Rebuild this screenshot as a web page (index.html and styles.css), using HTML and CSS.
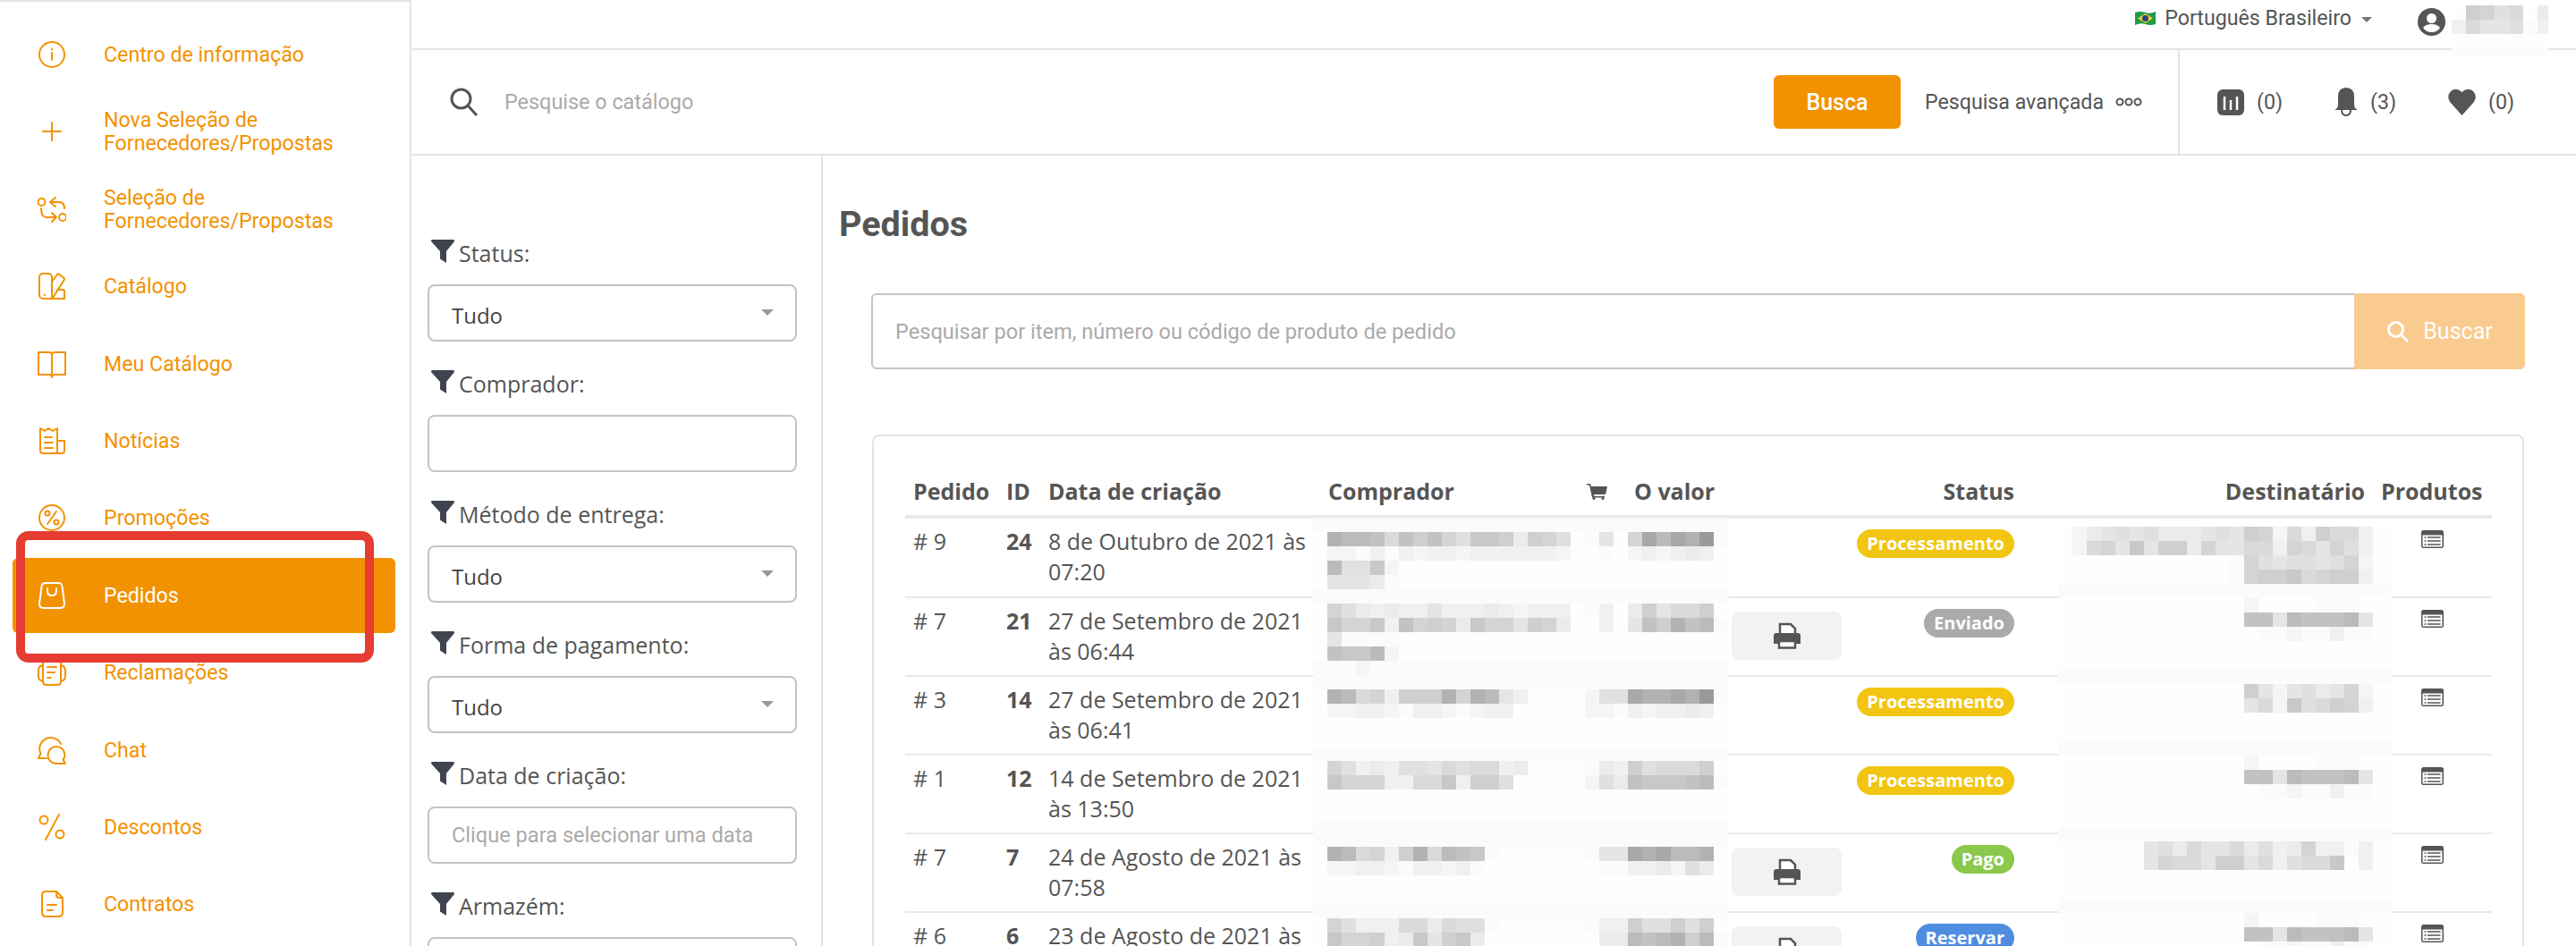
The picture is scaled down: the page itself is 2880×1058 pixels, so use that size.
FILE: index.html
```html
<!DOCTYPE html>
<html lang="pt-BR">
<head>
    <meta charset="UTF-8">
    <meta name="viewport" content="width=device-width, initial-scale=1.0">
    <title>Pedidos</title>
    <link rel="stylesheet" href="styles.css">
</head>
<body>
    <div class="app">
        <!-- Sidebar -->
        <nav class="sidebar">
            <a class="nav-item">
                <svg class="nav-icon" viewBox="0 0 32 32"><circle cx="16" cy="16" r="14"/><path d="M16 14v8M16 9.500v1"/></svg>
                <span>Centro de informação</span>
            </a>
            <a class="nav-item">
                <svg class="nav-icon" viewBox="0 0 32 32"><path d="M16 6v20M6 16h20"/></svg>
                <span>Nova Seleção de Fornecedores/Propostas</span>
            </a>
            <a class="nav-item">
                <svg class="nav-icon" viewBox="0 0 32 32"><circle cx="4.500" cy="8" r="4"/><circle cx="28" cy="25" r="4"/><path d="M20 3l-6 5 6 5M14 8h10q6 0 6 7M4 15q0 10 6 10h11M16 20l5 5-5 5"/></svg>
                <span>Seleção de Fornecedores/Propostas</span>
            </a>
            <a class="nav-item">
                <svg class="nav-icon" viewBox="0 0 32 32"><path d="M6 2h6a4 4 0 0 1 4 4v24H6a4 4 0 0 1-4-4V6a4 4 0 0 1 4-4zM16 11l6-8q1-1 2.500 0l5 4q1 1 0 2.500L17 29M22 20h6q2 0 2 2v8H14M8 25.500v.5"/></svg>
                <span>Catálogo</span>
            </a>
            <a class="nav-item">
                <svg class="nav-icon" viewBox="0 0 32 32"><path d="M1 3h12q3 0 3 3v25q0-3-3-3H1zM31 3H19q-3 0-3 3M31 3v25H19q-3 0-3 3"/></svg>
                <span>Meu Catálogo</span>
            </a>
            <a class="nav-item">
                <svg class="nav-icon" viewBox="0 0 32 32"><path d="M3 2l5 3 4-3 5 3 5-3v28H6q-3 0-3-3zM22 16h8v11q0 3-3 3h-5M8 12h8M8 18h9M8 24h9"/></svg>
                <span>Notícias</span>
            </a>
            <a class="nav-item">
                <svg class="nav-icon" viewBox="0 0 32 32"><circle cx="16" cy="16" r="14"/><circle cx="11" cy="11" r="2.500"/><circle cx="21" cy="21" r="2.500"/><path d="M21 9L11 23"/></svg>
                <span>Promoções</span>
            </a>
            <a class="nav-item active">
                <svg class="nav-icon" viewBox="0 0 32 32"><path d="M9 2h14q4 0 4.500 4L30 25q0 5-5 5H7q-5 0-5-5L4.500 6Q5 2 9 2zM11 8v3q0 5 5 5t5-5V8"/></svg>
                <span>Pedidos</span>
            </a>
            <a class="nav-item">
                <svg class="nav-icon" viewBox="0 0 32 32"><path d="M10 2h12q4 0 4 4v20q0 4-4 4H10q-4 0-4-4V6q0-4 4-4zM6 8q-5 1-5 6v6q0 5 5 6M26 8q5 1 5 6v6q0 5-5 6M11 10h10M11 16h8M11 22h4"/></svg>
                <span>Reclamações</span>
            </a>
            <a class="nav-item">
                <svg class="nav-icon" viewBox="0 0 32 32"><path d="M10 25H1l2.500-5A12 12 0 1 1 26 9M31 31H21a9.500 9.500 0 1 1 9.500-9.500q0 3-2 5z"/></svg>
                <span>Chat</span>
            </a>
            <a class="nav-item">
                <svg class="nav-icon" viewBox="0 0 32 32"><circle cx="7" cy="8" r="4.500"/><circle cx="25" cy="24" r="4.500"/><path d="M24 2L9 30"/></svg>
                <span>Descontos</span>
            </a>
            <a class="nav-item">
                <svg class="nav-icon" viewBox="0 0 32 32"><path d="M9 2h12l7 7v16q0 5-5 5H9q-4 0-4-5V6q0-4 4-4zM21 2v4q0 3 3 3h4M11 17h10M11 23h6"/></svg>
                <span>Contratos</span>
            </a>
        </nav>

        <div class="page">
            <!-- Top bar -->
            <div class="topbar">
                <svg class="flag" viewBox="0 0 23 15"><path fill="#1f9a48" d="M0 1q6-2 11.500 0T23 0v14q-6 2-11.500 0T0 15z"/><path fill="#f3d21b" d="M11.500 2L20 7.500 11.500 13 3 7.500z"/><circle fill="#24418f" cx="11.500" cy="7.500" r="3.500"/></svg>
                <span class="lang">Português Brasileiro</span>
                <span class="caret"></span>
                <svg class="user" viewBox="0 0 31 31"><circle fill="#555" cx="15.500" cy="15.500" r="15.500"/><circle fill="#fff" cx="15.500" cy="11.500" r="5.500"/><path fill="#fff" d="M6 22q3-4 9.500-4T25 22q-3 5-9.500 5T6 22z"/></svg>
            </div>

            <!-- Catalog search -->
            <div class="searchbar">
                <svg class="search-icon" viewBox="0 0 32 32"><circle cx="12.500" cy="12.500" r="10.500"/><path d="M20 20l10 11"/></svg>
                <input class="catalog-input" type="text" placeholder="Pesquise o catálogo">
                <button class="btn-search" type="button">Busca</button>
                <span class="advanced">Pesquisa avançada</span>
                <svg class="dots" viewBox="0 0 30 10"><circle cx="5" cy="5" r="3.500"/><circle cx="15" cy="5" r="3.500"/><circle cx="25" cy="5" r="3.500"/></svg>
                <div class="counters">
                    <div class="counter">
                        <svg class="counter-bars" viewBox="0 0 30 29"><rect fill="#555" width="30" height="29" rx="6"/><path stroke="#fff" stroke-width="2.500" d="M8 8v15M15 12v11M22 8v15"/></svg>
                        <span>(0)</span>
                    </div>
                    <div class="counter">
                        <svg class="counter-bell" viewBox="0 0 26 32"><path fill="#555" d="M13 0q9 0 9 10v9q0 4 4 6H0q4-2 4-6v-9Q4 0 13 0z"/><path fill="none" stroke="#555" stroke-width="2" d="M8 25q0 6 5 6t5-6"/></svg>
                        <span>(3)</span>
                    </div>
                    <div class="counter">
                        <svg class="counter-heart" viewBox="0 0 31 30"><path fill="#555" d="M15.500 30L2 15Q-2 8 3 3q6-5 12.500 1Q22-2 28 3q5 5 1 12z"/></svg>
                        <span>(0)</span>
                    </div>
                </div>
            </div>

            <div class="content">
                <!-- Filters -->
                <aside class="filters">
                    <label class="filter-label"><svg class="funnel" viewBox="0 0 26 26"><path d="M1 0h24q1 0 1 2l-9 11v13l-7-4.500V13L0 2q0-2 1-2z"/></svg>Status:</label>
                    <div class="select-wrap"><select class="control"><option>Tudo</option></select></div>

                    <label class="filter-label"><svg class="funnel" viewBox="0 0 26 26"><path d="M1 0h24q1 0 1 2l-9 11v13l-7-4.500V13L0 2q0-2 1-2z"/></svg>Comprador:</label>
                    <input class="control" type="text">

                    <label class="filter-label"><svg class="funnel" viewBox="0 0 26 26"><path d="M1 0h24q1 0 1 2l-9 11v13l-7-4.500V13L0 2q0-2 1-2z"/></svg>Método de entrega:</label>
                    <div class="select-wrap"><select class="control"><option>Tudo</option></select></div>

                    <label class="filter-label"><svg class="funnel" viewBox="0 0 26 26"><path d="M1 0h24q1 0 1 2l-9 11v13l-7-4.500V13L0 2q0-2 1-2z"/></svg>Forma de pagamento:</label>
                    <div class="select-wrap"><select class="control"><option>Tudo</option></select></div>

                    <label class="filter-label"><svg class="funnel" viewBox="0 0 26 26"><path d="M1 0h24q1 0 1 2l-9 11v13l-7-4.500V13L0 2q0-2 1-2z"/></svg>Data de criação:</label>
                    <input class="control control-date" type="text" placeholder="Clique para selecionar uma data">

                    <label class="filter-label"><svg class="funnel" viewBox="0 0 26 26"><path d="M1 0h24q1 0 1 2l-9 11v13l-7-4.500V13L0 2q0-2 1-2z"/></svg>Armazém:</label>
                    <div class="select-wrap"><select class="control"><option></option></select></div>
                </aside>

                <!-- Orders -->
                <main class="orders">
                    <h1>Pedidos</h1>
                    <div class="order-search">
                        <input type="text" placeholder="Pesquisar por item, número ou código de produto de pedido">
                        <button type="button">
                            <svg class="search-icon-white" viewBox="0 0 26 26"><circle cx="10.500" cy="10.500" r="8"/><path d="M16.500 16.500L24 24"/></svg>
                            Buscar
                        </button>
                    </div>

                    <div class="card">
                        <table class="order-table">
                            <colgroup>
                                <col class="col-order"><col class="col-id"><col class="col-date"><col class="col-buyer"><col class="col-cart"><col class="col-value"><col class="col-print"><col class="col-status"><col class="col-dest"><col class="col-products">
                            </colgroup>
                            <thead>
                                <tr>
                                    <th>Pedido</th>
                                    <th>ID</th>
                                    <th>Data de criação</th>
                                    <th>Comprador</th>
                                    <th><svg class="cart" viewBox="0 0 23 18"><path d="M0 0h4l1 3h18l-2 9H8l.5 2H20v1.500H6L3 1.500H0z"/><circle cx="8" cy="16.500" r="1.500"/><circle cx="18" cy="16.500" r="1.500"/></svg></th>
                                    <th>O valor</th>
                                    <th></th>
                                    <th class="right">Status</th>
                                    <th class="right">Destinatário</th>
                                    <th>Produtos</th>
                                </tr>
                            </thead>
                            <tbody>
                                <tr>
                                    <td># 9</td><td class="id">24</td><td>8 de Outubro de 2021 às 07:20</td><td></td><td></td><td></td><td></td>
                                    <td class="right"><span class="badge processing">Processamento</span></td><td></td>
                                    <td class="center"><svg class="list-icon" viewBox="0 0 25 20"><use href="#list"/></svg></td>
                                </tr>
                                <tr>
                                    <td># 7</td><td class="id">21</td><td>27 de Setembro de 2021 às 06:44</td><td></td><td></td><td></td>
                                    <td><button class="print" type="button"><svg class="print-icon" viewBox="0 0 32 30"><use href="#printer"/></svg></button></td>
                                    <td class="right"><span class="badge sent">Enviado</span></td><td></td>
                                    <td class="center"><svg class="list-icon" viewBox="0 0 25 20"><use href="#list"/></svg></td>
                                </tr>
                                <tr>
                                    <td># 3</td><td class="id">14</td><td>27 de Setembro de 2021 às 06:41</td><td></td><td></td><td></td><td></td>
                                    <td class="right"><span class="badge processing">Processamento</span></td><td></td>
                                    <td class="center"><svg class="list-icon" viewBox="0 0 25 20"><use href="#list"/></svg></td>
                                </tr>
                                <tr>
                                    <td># 1</td><td class="id">12</td><td>14 de Setembro de 2021 às 13:50</td><td></td><td></td><td></td><td></td>
                                    <td class="right"><span class="badge processing">Processamento</span></td><td></td>
                                    <td class="center"><svg class="list-icon" viewBox="0 0 25 20"><use href="#list"/></svg></td>
                                </tr>
                                <tr>
                                    <td># 7</td><td class="id">7</td><td>24 de Agosto de 2021 às 07:58</td><td></td><td></td><td></td>
                                    <td><button class="print" type="button"><svg class="print-icon" viewBox="0 0 32 30"><use href="#printer"/></svg></button></td>
                                    <td class="right"><span class="badge paid">Pago</span></td><td></td>
                                    <td class="center"><svg class="list-icon" viewBox="0 0 25 20"><use href="#list"/></svg></td>
                                </tr>
                                <tr>
                                    <td># 6</td><td class="id">6</td><td>23 de Agosto de 2021 às</td><td></td><td></td><td></td>
                                    <td><button class="print" type="button"><svg class="print-icon" viewBox="0 0 32 30"><use href="#printer"/></svg></button></td>
                                    <td class="right"><span class="badge reserve">Reservar</span></td><td></td>
                                    <td class="center"><svg class="list-icon" viewBox="0 0 25 20"><use href="#list"/></svg></td>
                                </tr>
                            </tbody>
                        </table>
                    </div>
                </main>
            </div>
        </div>
    </div>

    <!-- Shared icons -->
    <svg class="defs" aria-hidden="true">
        <symbol id="list" viewBox="0 0 25 20">
            <rect fill="#555" width="25" height="20" rx="2.500"/>
            <rect fill="#fff" x="1.500" y="5.500" width="22" height="13"/>
            <path stroke="#555" stroke-width="1.500" d="M3.500 8h2M7 8h14.500M3.500 12h2M7 12h14.500M3.500 16h2M7 16h14.500"/>
        </symbol>
        <symbol id="printer" viewBox="0 0 32 30">
            <path fill="#fff" stroke="#555" stroke-width="2.500" d="M8 2h12l5 5v8H8z"/>
            <path fill="#555" d="M4 12h24q3 0 3 3v9h-5v-4H6v4H1v-9q0-3 3-3z"/>
            <path fill="#fff" stroke="#555" stroke-width="2.500" d="M7 21h18v7.500H7z"/>
        </symbol>
    </svg>

    <!-- Redaction mosaics and the review marker lie over the page -->
    <canvas class="mosaic mosaic-user" width="108" height="58"></canvas>
    <canvas class="mosaic mosaic-buyer" width="464" height="479"></canvas>
    <canvas class="mosaic mosaic-dest" width="373" height="469"></canvas>
    <div class="marker"></div>

    <script src="mosaic.js"></script>
</body>
</html>
```

FILE: styles.css
```css
* {
    box-sizing: border-box;
}

body {
    margin: 0;
    width: 2880px;
    height: 1058px;
    overflow: hidden;
    position: relative;
    background: #fff;
    font-family: 'Roboto', sans-serif;
    font-size: 23.2px;
    color: #555;
}

.app {
    display: flex;
    height: 1058px;
    overflow: hidden;
}

/* Sidebar */
.sidebar {
    width: 460px;
    flex: none;
    padding: 17px 16px 0 14px;
    border-top: 2px solid #e4e4e4;
    border-right: 2px solid #e4e4e4;
    display: flex;
    flex-direction: column;
    gap: 2.4px;
}

.nav-item {
    height: 84px;
    flex: none;
    display: flex;
    align-items: center;
    gap: 42px;
    padding: 0 60px 0 28px;
    border-radius: 6px;
    color: #f39200;
    line-height: 26px;
}

.nav-icon {
    width: 32px;
    height: 32px;
    flex: none;
    fill: none;
    stroke: #f39200;
    stroke-width: 2;
    stroke-linecap: round;
    stroke-linejoin: round;
}

.nav-item.active {
    background: #f39200;
    color: #fff;
}

.nav-item.active .nav-icon {
    stroke: #fff;
}

.page {
    flex: 1;
    min-width: 0;
    display: flex;
    flex-direction: column;
}

/* Top bar */
.topbar {
    height: 56px;
    flex: none;
    border-bottom: 2px solid #e4e4e4;
    display: flex;
    align-items: center;
    justify-content: flex-end;
    padding: 0 146px 14px 0;
}

.flag {
    width: 23px;
    height: 15px;
    margin-right: 10px;
}

.lang {
    line-height: 26px;
}

.caret {
    width: 0;
    height: 0;
    margin: 3px 51px 0 11px;
    border-left: 6px solid transparent;
    border-right: 6px solid transparent;
    border-top: 6px solid #777;
}

.user {
    width: 31px;
    height: 31px;
    margin-bottom: -8px;
}

/* Catalog search */
.searchbar {
    height: 118px;
    flex: none;
    border-bottom: 2px solid #e4e4e4;
    display: flex;
    align-items: center;
    padding-left: 43px;
}

.search-icon {
    width: 32px;
    height: 32px;
    flex: none;
    fill: none;
    stroke: #555;
    stroke-width: 3;
}

.catalog-input {
    flex: 1;
    min-width: 0;
    border: none;
    outline: none;
    margin-left: 29px;
    padding: 0;
    font-family: 'Roboto', sans-serif;
    font-size: 23.4px;
}

.catalog-input::placeholder,
.control-date::placeholder,
.order-search input::placeholder {
    color: #aaa;
    opacity: 1;
}

.btn-search {
    width: 142px;
    height: 60px;
    flex: none;
    border: none;
    border-radius: 6px;
    background: #f39200;
    color: #fff;
    font-family: 'Roboto', sans-serif;
    font-size: 25px;
    font-weight: 500;
    padding: 0;
}

.advanced {
    margin-left: 27px;
    white-space: nowrap;
}

.dots {
    width: 30px;
    height: 10px;
    flex: none;
    margin-left: 13px;
    fill: none;
    stroke: #555;
    stroke-width: 2;
}

.counters {
    height: 116px;
    flex: none;
    margin-left: 40px;
    border-left: 2px solid #e4e4e4;
    padding-left: 42px;
    width: 445px;
    display: flex;
    align-items: center;
    gap: 58px;
}

.counter {
    display: flex;
    align-items: center;
    gap: 14px;
}

.counter-bars {
    width: 30px;
    height: 29px;
}

.counter-bell {
    width: 26px;
    height: 32px;
}

.counter-heart {
    width: 31px;
    height: 30px;
}

.content {
    flex: 1;
    min-height: 0;
    overflow: hidden;
    display: flex;
}

/* Filters */
.filters {
    width: 460px;
    flex: none;
    border-right: 2px solid #e4e4e4;
    padding: 94px 0 0 18px;
    font-family: 'Open Sans', sans-serif;
}

.filter-label {
    display: flex;
    align-items: center;
    gap: 5px;
    height: 30px;
    margin: 0 0 20px 4px;
    font-size: 25px;
    color: #555;
}

.funnel {
    width: 26px;
    height: 26px;
    flex: none;
    fill: #3f444e;
    position: relative;
    top: -2px;
}

.control {
    display: block;
    width: 413px;
    height: 64px;
    margin-bottom: 32px;
    padding: 5px 25px 0;
    border: 2px solid #c4c4c4;
    border-radius: 8px;
    background: #fff;
    appearance: none;
    outline: none;
    font-family: 'Open Sans', sans-serif;
    font-size: 24px;
    color: #444;
}

.control-date {
    padding-top: 0;
    font-family: 'Roboto', sans-serif;
    font-size: 23.6px;
}

.select-wrap {
    position: relative;
    width: 413px;
}

.select-wrap::after {
    content: "";
    position: absolute;
    left: 373px;
    top: 28px;
    border-left: 7px solid transparent;
    border-right: 7px solid transparent;
    border-top: 7px solid #999;
}

/* Orders */
.orders {
    flex: 1;
    min-width: 0;
    padding-left: 18px;
}

.orders h1 {
    margin: 54px 0 0;
    font-size: 39.5px;
    line-height: 46px;
    font-weight: 700;
    color: #555;
}

.order-search {
    display: flex;
    height: 85px;
    width: 1849px;
    margin: 54px 0 0 36px;
    border: 2px solid #c4c4c4;
    border-radius: 6px;
}

.order-search input {
    flex: 1;
    min-width: 0;
    border: none;
    outline: none;
    background: none;
    padding: 0 25px;
    font-family: 'Roboto', sans-serif;
    font-size: 23.6px;
}

.order-search button {
    width: 191px;
    margin: -2px -2px -2px 0;
    border: none;
    border-radius: 0 6px 6px 0;
    background: #f9cb8f;
    color: #fff;
    font-family: 'Roboto', sans-serif;
    font-size: 25px;
    display: flex;
    align-items: center;
    justify-content: center;
    gap: 15px;
}

.search-icon-white {
    width: 26px;
    height: 26px;
    fill: none;
    stroke: #fff;
    stroke-width: 3;
}

.card {
    width: 1847px;
    height: 700px;
    margin: 73px 0 0 37px;
    padding: 40px 35px 0;
    border: 2px solid #e4e4e4;
    border-radius: 8px;
}

/* Orders table */
.order-table {
    width: 1774px;
    table-layout: fixed;
    border-collapse: separate;
    border-spacing: 0;
    font-family: 'Open Sans', sans-serif;
    font-size: 25px;
    line-height: 34px;
    color: #555;
}

.col-order { width: 104px; }
.col-id { width: 47px; }
.col-date { width: 313px; }
.col-buyer { width: 289px; }
.col-cart { width: 53px; }
.col-value { width: 112px; }
.col-print { width: 136px; }
.col-status { width: 195px; }
.col-dest { width: 392px; }
.col-products { width: 133px; }

.order-table th {
    height: 52px;
    padding: 0 0 6px 9px;
    border-bottom: 4px solid #e9e9e9;
    text-align: left;
    font-weight: 700;
    white-space: nowrap;
}

.order-table th.right,
.order-table td.right {
    text-align: right;
    padding-right: 9px;
    padding-left: 0;
}

.order-table tbody tr {
    height: 88px;
}

.order-table tbody tr:first-child {
    height: 87px;
}

.order-table td {
    padding: 8px 9px 0;
    vertical-align: top;
    border-top: 2px solid #e9e9e9;
}

.order-table tbody tr:first-child td {
    border-top: none;
}

.order-table td.id {
    font-weight: 700;
}

.order-table td.center {
    text-align: center;
    padding: 13px 0 0;
}

.cart {
    width: 23px;
    height: 18px;
    fill: #555;
}

.badge {
    display: inline-block;
    height: 32px;
    margin-top: 4px;
    padding: 0 11px;
    border-radius: 16px;
    color: #fff;
    font-size: 20px;
    font-weight: 700;
    line-height: 31px;
    vertical-align: top;
}

.processing { background: #f2c511; }
.sent { background: #aaa; }
.paid { background: #8bc84b; }
.reserve { background: #4f8de0; }

.print {
    display: flex;
    align-items: center;
    justify-content: center;
    width: 123px;
    height: 54px;
    margin: 7px 0 0 -3px;
    padding: 0;
    border: none;
    border-radius: 8px;
    background: #f2f2f2;
}

.print-icon {
    width: 32px;
    height: 30px;
}

.list-icon {
    width: 25px;
    height: 20px;
    vertical-align: top;
}

.defs {
    position: absolute;
    width: 0;
    height: 0;
}

/* Overlays */
.mosaic {
    position: absolute;
    display: block;
}

.mosaic-user {
    left: 2741px;
    top: 6px;
}

.mosaic-buyer {
    left: 1468px;
    top: 579px;
}

.mosaic-dest {
    left: 2301px;
    top: 589px;
}

.marker {
    position: absolute;
    left: 18px;
    top: 594px;
    width: 400px;
    height: 147px;
    border: 10px solid #e63c32;
    border-radius: 14px;
}
```

FILE: mosaic.js
```js
// gray level per block, one hex digit each: 0 is the darkest, f is near white
const shades = ['#9a9a9a', '#a8a8a8', '#b2b2b2', '#bbbbbb', '#c2c2c2', '#c8c8c8', '#cfcfcf', '#d4d4d4',
    '#dadada', '#e0e0e0', '#e5e5e5', '#ebebeb', '#f0f0f0', '#f5f5f5', '#fbfbfb', '#fefefe'];

const blank = n => 'f'.repeat(n);
const light = n => 'e'.repeat(n);

const destA = blank(13) + 'dffffeeefff';
const destB = blank(13) + '44a34443aff';
const destC = blank(13) + 'feedeeceeff';

const mosaics = {
    'mosaic-user': ['f6798fb', 'c8aa9ec', blank(7), light(7)],
    'mosaic-buyer': [
        light(29),
        'f2334846479556b679feaf713120e',
        'fddececdccdccccccdffefdcdcbcf',
        'f3995d' + blank(23),
        'faaabe' + blank(23),
        light(29),
        'f79bcbccacccbcdcccfecfb6a886f',
        'f5775c4767b577a67bffcfa46243e',
        'faeeee' + blank(23),
        'f4553d' + blank(23),
        'eeed' + light(25),
        light(29),
        'f2387c6662723acffffd99122120e',
        'fddccdeccdedccfffffddecdccbcf',
        blank(29),
        blank(29),
        light(29),
        'f79cbc99a8988cbffffebc698886f',
        'f5777cc885c669fffffd9b455543e',
        blank(29),
        blank(29),
        light(29),
        light(29),
        'f2387c628345effffffeaa121332f',
        'fddccdeccdceffffffffeeccbd9bf',
        blank(29),
        blank(29),
        light(29),
        'f79ccc88b899effffffecc699696f',
        'f5776cb5a65bffffffffbb343263e'
    ],
    'mosaic-dest': [
        'fdba9a9bbba9a67d8c688cff',
        'fd87a5a66b7aa88c78a79cff',
        blank(12) + 'e79a99a97dff',
        blank(12) + 'e76658766cff',
        light(24),
        destA,
        destB,
        destC,
        blank(24),
        blank(24),
        light(24),
        blank(13) + '6ada9ba7dff',
        blank(13) + 'a8d59867cff',
        blank(24),
        blank(24),
        light(24),
        destA,
        destB,
        destC,
        blank(24),
        blank(24),
        light(24),
        blank(6) + 'a9b8aa8b9cb7ccecff',
        blank(6) + 'a788a66a8c9885fcff',
        blank(24),
        blank(24),
        light(24),
        destA,
        destB,
        destC
    ]
};

Object.keys(mosaics).forEach(name => {
    const ctx = document.querySelector('.' + name).getContext('2d');
    mosaics[name].forEach((row, y) => {
        row.split('').forEach((digit, x) => {
            ctx.fillStyle = shades[parseInt(digit, 16)];
            ctx.fillRect(x * 16, y * 16, 16, 16);
        });
    });
});
```
